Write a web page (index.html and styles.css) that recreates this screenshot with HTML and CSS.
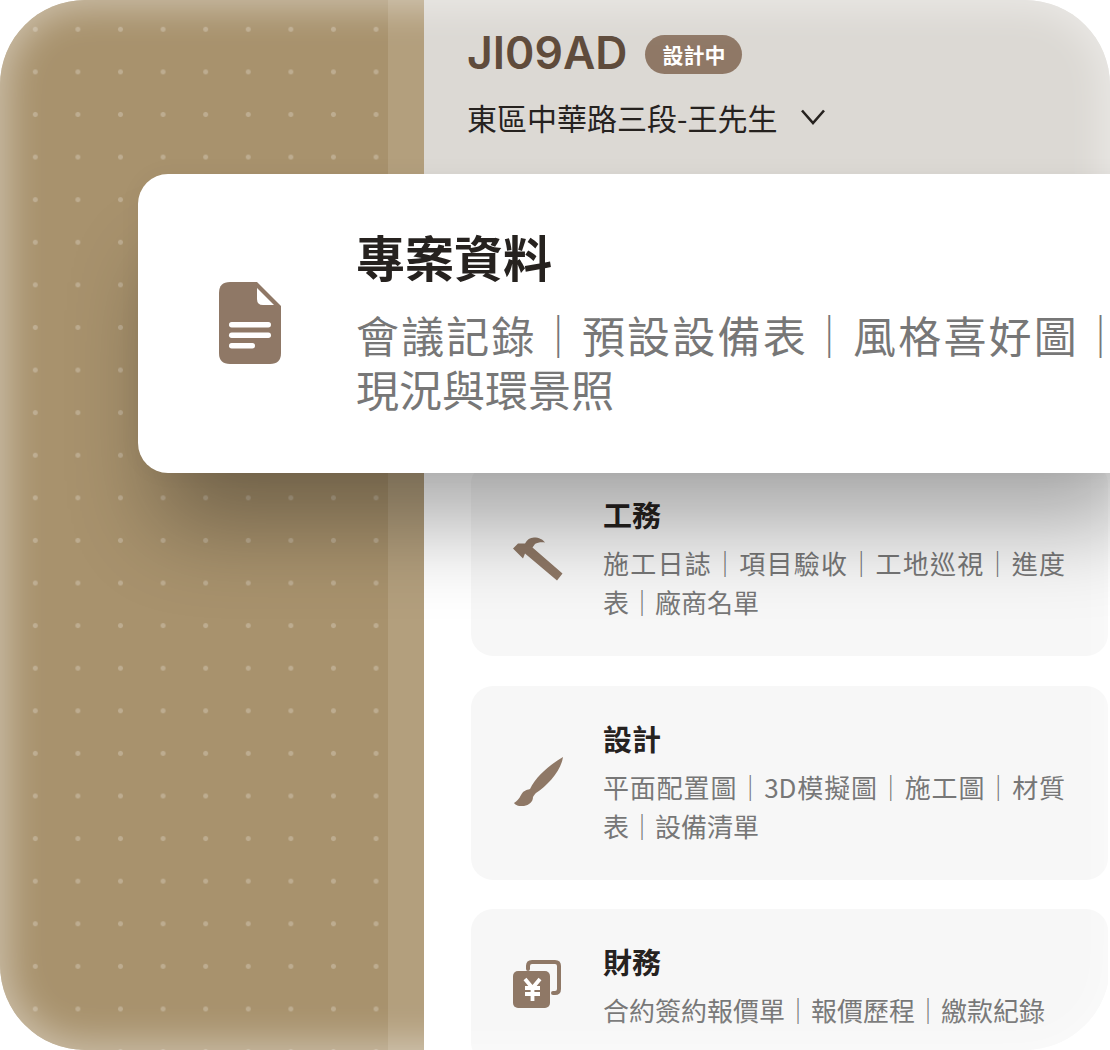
FILE: index.html
```html
<!DOCTYPE html>
<html lang="zh-Hant">
    <head>
        <meta charset="utf-8">
        <title>JI09AD</title>
        <link rel="stylesheet" href="styles.css">
    </head>
    <body>
        <div class="screen">
            <div class="side">
                <div class="side-dots"></div>
                <div class="side-strip"></div>
            </div>
            <div class="main">
                <div class="header">
                    <div class="code-row">
                        <span class="code">JI09AD</span>
                        <span class="badge">設計中</span>
                    </div>
                    <div class="project-row">
                        <span class="project">東區中華路三段-王先生</span>
                        <svg class="chevron" width="24" height="16" viewBox="0 0 24 16"><path d="M1 1.500 L12 14 L23 1.500" fill="none" stroke="#26221f" stroke-width="2.6"/></svg>
                    </div>
                </div>
                <div class="list">
                    <div class="card">
                        <svg class="card-icon" width="50" height="50" viewBox="0 0 50 50"><path d="M0 15.500 L5 10.500 H12 C14 6.500 17 4.500 21 4.500 C26 4.500 30 6.500 32 9.500 C28 9 24.500 9.500 22 11 L19.500 14.500 L49.500 40.500 L44 47.500 L12 20.500 L10 25.500 Z" fill="#8f7866"/></svg>
                        <div class="card-text">
                            <div class="card-title">工務</div>
                            <div class="card-desc">施工日誌｜項目驗收｜工地巡視｜進度表｜廠商名單</div>
                        </div>
                    </div>
                    <div class="card">
                        <svg class="card-icon" width="50" height="50" viewBox="0 0 50 50"><path d="M50 1 C38 8 23 20 17 33 C13 34 10 35 8 39 C6 43 4 45 1 47 C3 50 8 50.500 11 50 C16 49 20 46 20 41 C21 39 22 38 23 37 C35 29 48 15 50 1Z" fill="#8f7866"/></svg>
                        <div class="card-text">
                            <div class="card-title">設計</div>
                            <div class="card-desc">平面配置圖｜3D模擬圖｜施工圖｜材質表｜設備清單</div>
                        </div>
                    </div>
                    <div class="card">
                        <svg class="card-icon" width="50" height="50" viewBox="0 0 50 50"><path d="M15 9 V6 Q15 2 19 2 H42 Q46 2 46 6 V29 Q46 33 42 33 H40" fill="none" stroke="#8f7866" stroke-width="4" stroke-linecap="round"/><rect x="0" y="11" width="37" height="37" rx="5" fill="#8f7866"/><path d="M12 19 L19.500 28 L27 19 M12 28 H27 M12 34 H27 M19.500 28 V41" fill="none" stroke="#fff" stroke-width="3.800"/></svg>
                        <div class="card-text">
                            <div class="card-title">財務</div>
                            <div class="card-desc">合約簽約報價單｜報價歷程｜繳款紀錄</div>
                        </div>
                    </div>
                </div>
            </div>
            <div class="edge-glow"></div>
            <div class="float-card">
                <svg class="float-icon" width="63" height="84" viewBox="0 0 63 84"><path d="M11 1 H38 L62 25 V72 Q62 83 51 83 H11 Q0 83 0 72 V12 Q0 1 11 1Z" fill="#8f7866"/><path d="M38 7 L55 24 H44 Q38 24 38 18Z" fill="#fff"/><rect x="10" y="41" width="42" height="5.500" rx="2.700" fill="#fff"/><rect x="10" y="51.500" width="42" height="5.500" rx="2.700" fill="#fff"/><rect x="10" y="62" width="26" height="5.500" rx="2.700" fill="#fff"/></svg>
                <div class="float-text">
                    <div class="float-title">專案資料</div>
                    <div class="float-desc">會議記錄｜預設設備表｜風格喜好圖<span class="last-bar">｜</span>現況與環景照</div>
                </div>
            </div>
        </div>
    </body>
</html>
```

FILE: styles.css
```css
html, body {
    margin: 0;
    padding: 0;
    background: #fff;
}

.screen {
    position: relative;
    display: flex;
    width: 1110px;
    height: 1050px;
    overflow: hidden;
    border-radius: 85px;
    font-family: "Noto Sans CJK TC", "Noto Sans", sans-serif;
}

.side {
    display: flex;
    flex: none;
    width: 424px;
}

.side-dots {
    flex: none;
    width: 388px;
    background-color: #a8926d;
    background-image: radial-gradient(circle, rgba(255,255,255,.24) 2px, transparent 3px);
    background-size: 42.6px 42.6px;
    background-position: 14px 8px;
}

.side-strip {
    flex: 1;
    background: #b39f7d;
}

.main {
    flex: 1;
    min-width: 0;
    background: #fff;
}

.header {
    box-sizing: border-box;
    height: 174px;
    padding: 26px 43px 0;
    background: #dcd9d4;
}

.code-row {
    display: flex;
    align-items: center;
    gap: 18px;
    height: 54px;
}

.code {
    font-family: Inter, "Noto Sans", sans-serif;
    font-size: 44.500px;
    font-weight: 600;
    color: #5f4b3b;
}

.badge {
    margin-top: 2px;
    padding: 0 17px;
    line-height: 39px;
    border-radius: 20px;
    background: #8f7866;
    color: #fff;
    font-size: 21px;
    font-weight: 700;
}

.project-row {
    display: flex;
    align-items: center;
    gap: 24px;
    margin-top: 13px;
    height: 48px;
}

.project {
    font-size: 30px;
    color: #26221f;
}

.list {
    display: flex;
    flex-direction: column;
    gap: 29.500px;
    padding: 288px 0 0 47px;
}

.card {
    display: flex;
    flex: none;
    align-items: center;
    gap: 40px;
    padding: 32px 42px 35px;
    width: 637px;
    box-sizing: border-box;
    border-radius: 22px;
    background: #f7f7f7;
}

.card-icon {
    flex: none;
}

.card-title {
    font-size: 29px;
    line-height: 40px;
    font-weight: 700;
    color: #26221f;
}

.card-desc {
    margin-top: 9px;
    width: 462px;
    font-size: 26px;
    line-height: 39px;
    text-align: justify;
    color: #777;
}

/* light rim round the screen */
.edge-glow {
    position: absolute;
    inset: 0;
    border-radius: 85px;
    box-shadow: inset 0 0 36px 8px rgba(255,255,255,.42);
    pointer-events: none;
}

.float-card {
    position: absolute;
    top: 174px;
    left: 138px;
    display: flex;
    align-items: center;
    box-sizing: border-box;
    width: 1020px;
    height: 299px;
    padding: 0 0 4px 81px;
    gap: 74px;
    border-radius: 30px;
    background: #fff;
    box-shadow: 0 72px 90px -20px rgba(0,0,0,.33), 0 0 24px rgba(0,0,0,.04);
}

.float-icon {
    flex: none;
    margin-top: 3px;
}

.float-title {
    font-size: 49px;
    line-height: 64px;
    font-weight: 700;
    color: #26221f;
}

.float-desc {
    margin-top: 23px;
    width: 753px;
    font-family: "Liberation Sans", "Noto Sans CJK TC", sans-serif;
    font-size: 43px;
    line-height: 54px;
    text-align: justify;
    color: #777;
}

/* keeps the last bar of the line inside the screen edge */
.last-bar {
    letter-spacing: -13px;
}
```
